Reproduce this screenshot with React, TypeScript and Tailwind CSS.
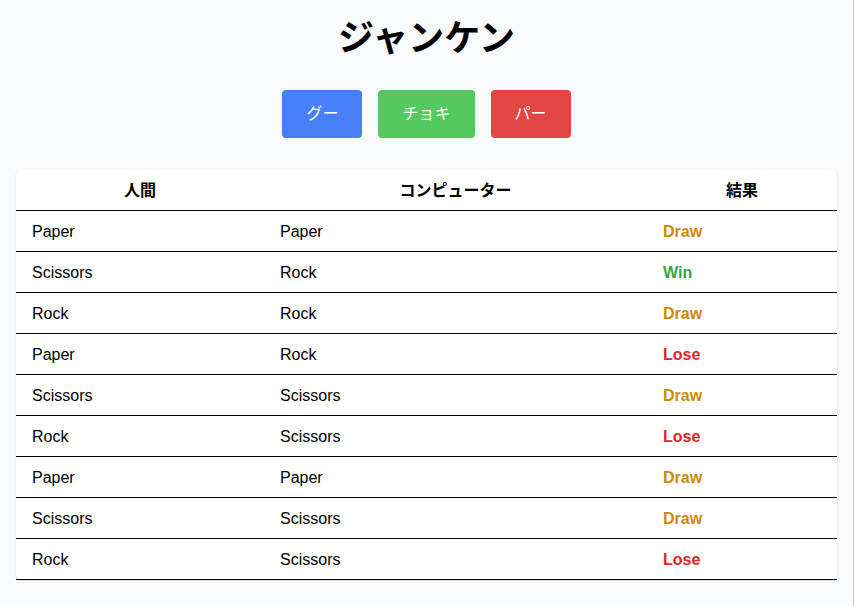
import { useState } from 'react';

type Hand = 'Rock' | 'Scissors' | 'Paper';
type Result = 'Win' | 'Lose' | 'Draw';

const history: { human: Hand; computer: Hand; result: Result }[] = [
  { human: 'Paper', computer: 'Paper', result: 'Draw' },
  { human: 'Scissors', computer: 'Rock', result: 'Win' },
  { human: 'Rock', computer: 'Rock', result: 'Draw' },
  { human: 'Paper', computer: 'Rock', result: 'Lose' },
  { human: 'Scissors', computer: 'Scissors', result: 'Draw' },
  { human: 'Rock', computer: 'Scissors', result: 'Lose' },
  { human: 'Paper', computer: 'Paper', result: 'Draw' },
  { human: 'Scissors', computer: 'Scissors', result: 'Draw' },
  { human: 'Rock', computer: 'Scissors', result: 'Lose' },
];

const resultColor: Record<Result, string> = {
  Win: 'text-[#3ba247]',
  Lose: 'text-[#dc2626]',
  Draw: 'text-[#ca8a04]',
};

export default function App() {
  const [rows] = useState(history);

  return (
    <div
      className="min-h-screen bg-[#f9fafb] border-r border-[#c4c4c4] px-4 pt-[19px] pb-6 text-black"
      style={{ fontFamily: '"Liberation Sans", "Noto Sans CJK JP", sans-serif' }}
    >
      <h1 className="text-center text-4xl font-bold leading-10 mb-[31px]">ジャンケン</h1>

      <div className="flex justify-center gap-4 mb-8">
        <button className="bg-[#467ff7] text-white px-6 py-3 rounded text-base leading-6">グー</button>
        <button className="bg-[#54c95d] text-white px-6 py-3 rounded text-base leading-6">チョキ</button>
        <button className="bg-[#e34542] text-white px-6 py-3 rounded text-base leading-6">パー</button>
      </div>

      <table className="w-full bg-white rounded-md shadow-sm border-collapse">
        <thead>
          <tr className="border-b border-black">
            <th className="w-[248px] pt-[9px] pb-[7px] px-4 h-10 text-center font-bold">人間</th>
            <th className="w-[383px] pt-[9px] pb-[7px] px-4 h-10 text-center font-bold">コンピューター</th>
            <th className="pt-[9px] pb-[7px] px-4 h-10 text-center font-bold">結果</th>
          </tr>
        </thead>
        <tbody>
          {rows.map((r, i) => (
            <tr key={i} className="border-b border-black">
              <td className="px-4 h-[41px] pt-[9px] pb-[7px]">{r.human}</td>
              <td className="px-4 h-[41px] pt-[9px] pb-[7px]">{r.computer}</td>
              <td className={`px-4 h-[41px] pt-[9px] pb-[7px] font-bold ${resultColor[r.result]}`}>{r.result}</td>
            </tr>
          ))}
        </tbody>
      </table>
    </div>
  );
}
